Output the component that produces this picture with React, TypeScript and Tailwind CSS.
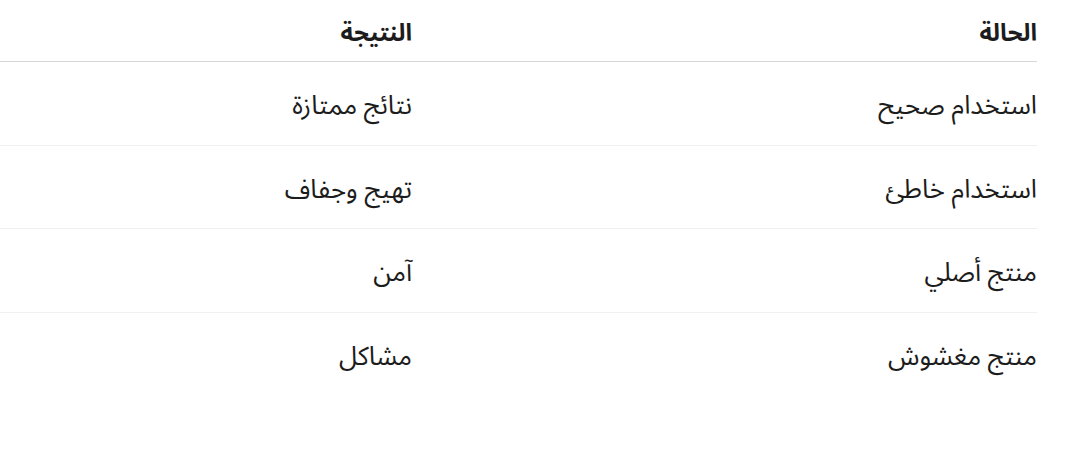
const ROWS = [
  { state: "استخدام صحيح", result: "نتائج ممتازة" },
  { state: "استخدام خاطئ", result: "تهيج وجفاف" },
  { state: "منتج أصلي", result: "آمن" },
  { state: "منتج مغشوش", result: "مشاكل" },
];

export default function App() {
  return (
    <div
      dir="rtl"
      className="min-h-screen bg-white pr-8 pl-0 text-[#1c1c1c] font-['Noto_Sans_Arabic','Noto_Sans',sans-serif]"
    >
      {/* header */}
      <div className="grid grid-cols-[625px_1fr] h-[62px] items-center border-b border-[#d6d6d6] pt-[6px]">
        <div className="text-[24px] font-bold">الحالة</div>
        <div className="text-[24px] font-bold">النتيجة</div>
      </div>
      {ROWS.map((r, i) => (
        <div
          key={r.state}
          className={
            "grid grid-cols-[625px_1fr] h-[83.5px] items-center pt-[6px] " +
            (i < ROWS.length - 1 ? "border-b border-[#f0f0f0]" : "")
          }
        >
          <div className="text-[26px] leading-none">{r.state}</div>
          <div className="text-[26px] leading-none">{r.result}</div>
        </div>
      ))}
    </div>
  );
}
